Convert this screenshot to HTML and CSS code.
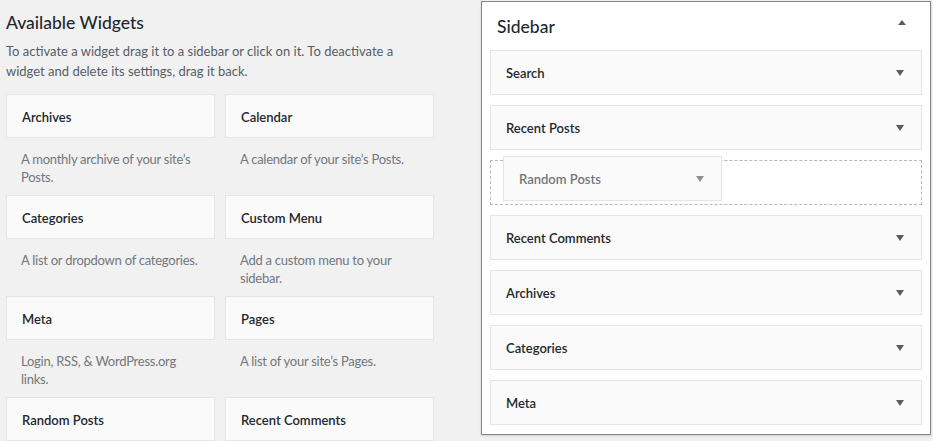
FILE: index.html
```html
<!DOCTYPE html>
<html>
<head>
<meta charset="utf-8">
<link rel="stylesheet" href="styles.css">
</head>
<body>
<div class="page">
  <section class="available">
    <h2 class="heading">Available Widgets</h2>
    <p class="intro">To activate a widget drag it to a sidebar or click on it. To deactivate a widget and delete its settings, drag it back.</p>
    <div class="grid">
      <div class="item"><div class="card">Archives</div><p class="desc">A monthly archive of your site’s Posts.</p></div>
      <div class="item"><div class="card">Calendar</div><p class="desc">A calendar of your site’s Posts.</p></div>
      <div class="item"><div class="card">Categories</div><p class="desc">A list or dropdown of categories.</p></div>
      <div class="item"><div class="card">Custom Menu</div><p class="desc">Add a custom menu to your sidebar.</p></div>
      <div class="item"><div class="card">Meta</div><p class="desc">Login, RSS, &amp; WordPress.org links.</p></div>
      <div class="item"><div class="card">Pages</div><p class="desc">A list of your site’s Pages.</p></div>
      <div class="item"><div class="card">Random Posts</div></div>
      <div class="item"><div class="card">Recent Comments</div></div>
    </div>
  </section>
  <section class="sidebar">
    <div class="sidebar-head">
      <h2 class="heading">Sidebar</h2>
      <svg class="arrow up" width="8" height="5" viewBox="0 0 8 5"><path d="M0 5 L4 0 L8 5 Z"/></svg>
    </div>
    <div class="widgets">
      <div class="wcard"><span>Search</span><svg class="arrow" width="8" height="6" viewBox="0 0 8 6"><path d="M0 0 L8 0 L4 6 Z"/></svg></div>
      <div class="wcard"><span>Recent Posts</span><svg class="arrow" width="8" height="6" viewBox="0 0 8 6"><path d="M0 0 L8 0 L4 6 Z"/></svg></div>
      <div class="placeholder">
        <div class="wcard helper"><span>Random Posts</span><svg class="arrow" width="8" height="6" viewBox="0 0 8 6"><path d="M0 0 L8 0 L4 6 Z"/></svg></div>
      </div>
      <div class="wcard"><span>Recent Comments</span><svg class="arrow" width="8" height="6" viewBox="0 0 8 6"><path d="M0 0 L8 0 L4 6 Z"/></svg></div>
      <div class="wcard"><span>Archives</span><svg class="arrow" width="8" height="6" viewBox="0 0 8 6"><path d="M0 0 L8 0 L4 6 Z"/></svg></div>
      <div class="wcard"><span>Categories</span><svg class="arrow" width="8" height="6" viewBox="0 0 8 6"><path d="M0 0 L8 0 L4 6 Z"/></svg></div>
      <div class="wcard"><span>Meta</span><svg class="arrow" width="8" height="6" viewBox="0 0 8 6"><path d="M0 0 L8 0 L4 6 Z"/></svg></div>
    </div>
  </section>
</div>
</body>
</html>
```
FILE: styles.css
```css
html, body {
  margin: 0;
  padding: 0;
  background: #f1f1f1;
  height: 441px;
  overflow: hidden;
}
body {
  font-family: "Lato", "Open Sans", sans-serif;
  color: #23282d;
}
.page {
  display: flex;
  align-items: flex-start;
  padding-left: 6px;
}
.available {
  width: 429px;
}
.heading {
  margin: 0;
  font-size: 17.5px;
  font-weight: 500;
  line-height: 26px;
  color: #23282d;
}
.available .heading {
  padding-top: 10px;
}
.intro {
  margin: 5px 0 13px;
  font-size: 13px;
  line-height: 20px;
  color: #555d66;
  padding-right: 20px;
}
.grid {
  display: grid;
  grid-template-columns: 209px 209px;
  column-gap: 10px;
  row-gap: 9px;
}
.card {
  height: 41px;
  box-sizing: content-box;
  border: 1px solid #e5e5e5;
  background: #fafafa;
  padding: 1px 15px 0;
  display: flex;
  align-items: center;
  font-size: 13px;
  font-weight: 600;
  color: #23282d;
}
.desc {
  margin: 0;
  padding: 12px 15px 0;
  font-size: 13px;
  letter-spacing: -0.25px;
  line-height: 18px;
  color: #72777c;
  min-height: 36px;
}
.sidebar {
  margin-left: 46px;
  margin-top: 1px;
  width: 448px;
  height: 432px;
  border: 1px solid #82878c;
  background: #fff;
  box-shadow: 0 1px 2px rgba(0,0,0,0.15);
}
.sidebar-head {
  display: flex;
  justify-content: space-between;
  align-items: flex-start;
  padding: 12px 24px 10px 15px;
}
.arrow {
  fill: #555d66;
  display: block;
}
.arrow.up {
  margin-top: 6px;
}
.widgets {
  padding: 0 8px;
  display: flex;
  flex-direction: column;
  gap: 10px;
}
.wcard {
  height: 43px;
  border: 1px solid #e5e5e5;
  background: #fafafa;
  display: flex;
  align-items: center;
  justify-content: space-between;
  padding: 0 17px 0 15px;
  font-size: 13px;
  font-weight: 600;
  color: #23282d;
}
.placeholder {
  position: relative;
  height: 43px;
  border: 1px dashed #b4b9be;
}
.helper {
  position: absolute;
  left: 12px;
  top: -5px;
  width: 185px;
  color: #72777c;
}
.helper .arrow {
  fill: #8c8f94;
}
```
